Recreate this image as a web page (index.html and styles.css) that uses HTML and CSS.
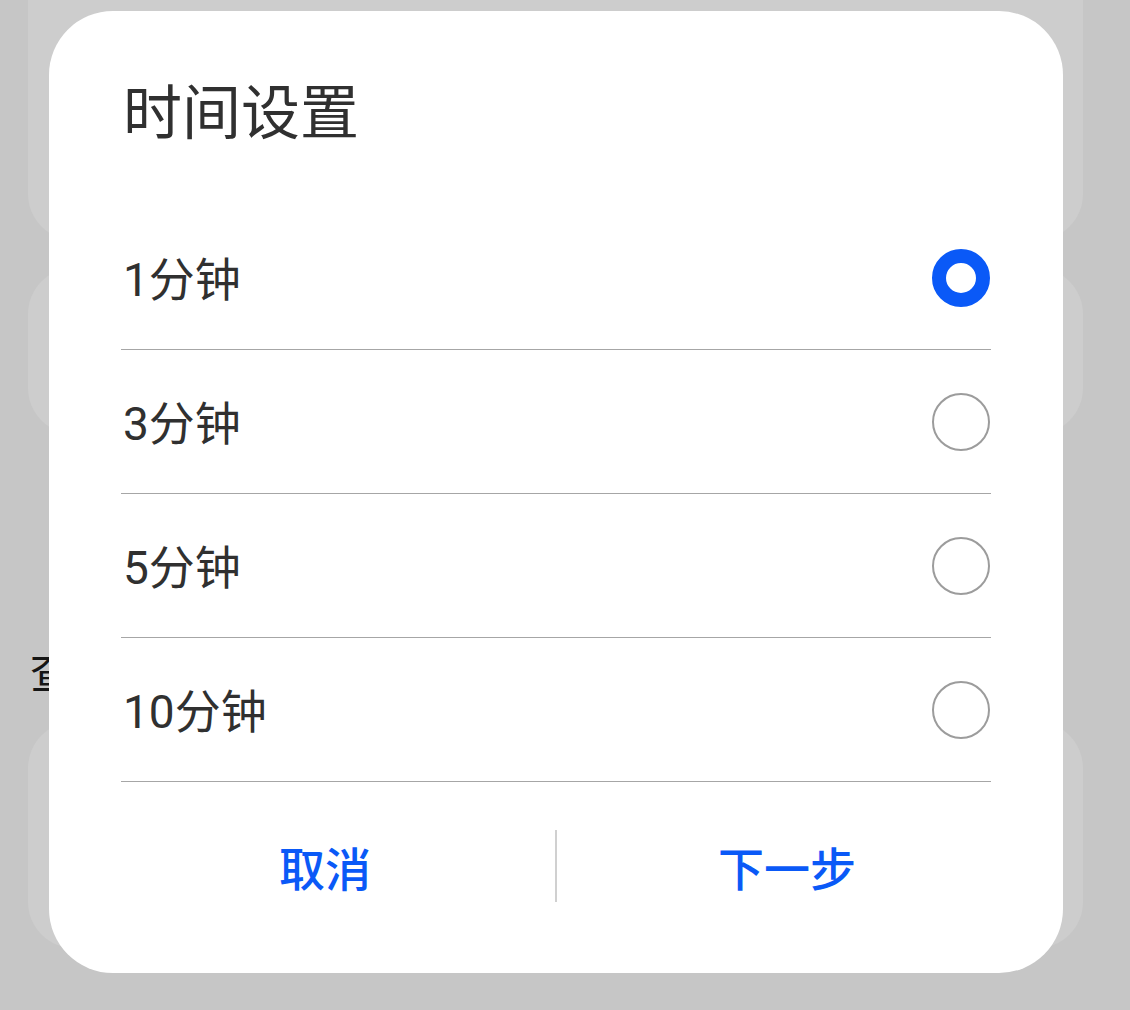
FILE: index.html
```html
<!DOCTYPE html>
<html lang="zh-CN">
<head>
<meta charset="utf-8">
<title>时间设置</title>
<link rel="stylesheet" href="styles.css">
</head>
<body>
<div class="page">
  <div class="card card-top"></div>
  <div class="card card-mid"></div>
  <div class="label-row"><span class="label">查</span></div>
  <div class="card card-bottom"></div>
</div>

<div class="dialog">
  <h1 class="title">时间设置</h1>
  <ul class="options">
    <li class="option"><span class="option-text">1分钟</span><span class="radio radio-on"></span></li>
    <li class="option"><span class="option-text">3分钟</span><span class="radio"></span></li>
    <li class="option"><span class="option-text">5分钟</span><span class="radio"></span></li>
    <li class="option"><span class="option-text">10分钟</span><span class="radio"></span></li>
  </ul>
  <div class="actions">
    <button class="action">取消</button>
    <span class="action-sep"></span>
    <button class="action">下一步</button>
  </div>
</div>
</body>
</html>
```

FILE: styles.css
```css
html, body {
  margin: 0;
  padding: 0;
}
body {
  width: 1130px;
  height: 1010px;
  overflow: hidden;
  position: relative;
  background: #c6c6c6;
  font-family: Roboto, "Noto Sans CJK SC", sans-serif;
}
.page {
  display: flex;
  flex-direction: column;
  padding: 0 47px 0 28px;
}
.card {
  background: #cdcdcd;
  border-radius: 46px;
}
.card-top {
  margin-top: -60px;
  height: 300px;
}
.card-mid {
  margin-top: 28px;
  height: 166px;
}
.label-row {
  margin-top: 206px;
  height: 60px;
  display: flex;
  align-items: center;
}
.label {
  font-family: "Noto Sans CJK SC", sans-serif;
  font-size: 44px;
  line-height: 60px;
  color: #151515;
  padding-left: 2px;
}
.card-bottom {
  margin-top: 22px;
  height: 226px;
}

.dialog {
  position: absolute;
  left: 49px;
  top: 11px;
  width: 1014px;
  height: 962px;
  background: #ffffff;
  border-radius: 64px;
  box-sizing: border-box;
  padding: 0 72px;
  display: flex;
  flex-direction: column;
}
.title {
  margin: 58px 0 0 0;
  font-family: "Noto Sans CJK SC", sans-serif;
  font-size: 59px;
  font-weight: 400;
  line-height: 80px;
  color: #303030;
  padding-left: 2px;
}
.options {
  list-style: none;
  margin: 57px 0 0 0;
  padding: 0;
}
.option {
  height: 143px;
  border-bottom: 1px solid #a6a6a6;
  display: flex;
  align-items: center;
  justify-content: space-between;
}
.option-text {
  font-size: 46px;
  color: #303030;
  padding-bottom: 4px;
  padding-left: 2px;
}
.radio {
  width: 58px;
  height: 58px;
  box-sizing: border-box;
  border-radius: 50%;
  border: 2.5px solid #9c9c9c;
  margin-right: 1px;
}
.radio-on {
  border: 14px solid #0a59f7;
}
.actions {
  margin: 33px -26px 0 -26px;
  height: 110px;
  display: flex;
  align-items: center;
}
.action {
  flex: 1;
  height: 110px;
  border: 0;
  background: transparent;
  padding: 0 0 8px 0;
  font-family: "Noto Sans CJK SC", sans-serif;
  font-size: 46px;
  font-weight: 500;
  color: #0a59f7;
}
.action-sep {
  width: 2px;
  height: 72px;
  margin-top: -8px;
  background: #d0d0d0;
}
```
